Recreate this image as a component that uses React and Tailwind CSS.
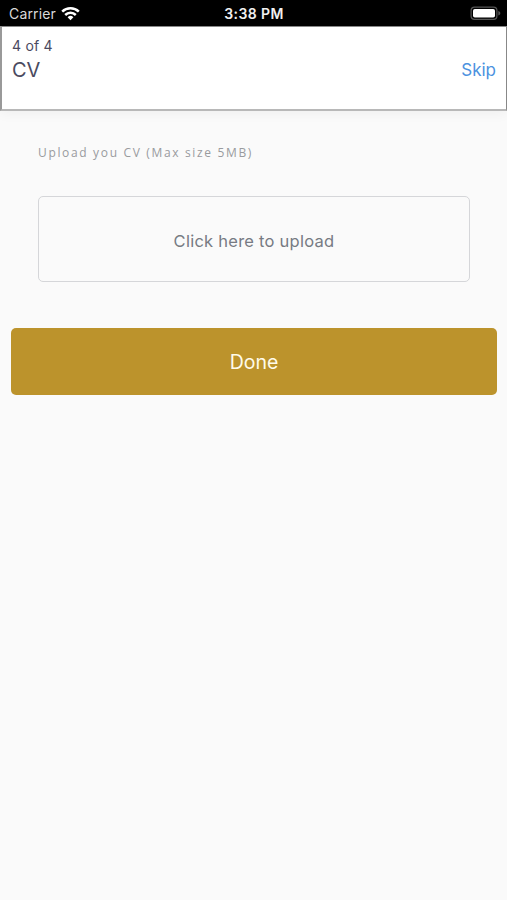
function StatusBar() {
  return (
    <div className="grid h-[26px] grid-cols-3 items-center bg-black text-white">
      <div className="flex items-center gap-[5px] pl-[9px] text-[14px] leading-none text-[#d9d9d9]">
        <span className="w-[47px] pt-px whitespace-nowrap tracking-[0.15px]">Carrier</span>
        <svg width="19" height="15" viewBox="0 0 19 15" fill="none" stroke="white" strokeWidth="2.5">
          <path d="M1.2 5.7a11.8 11.8 0 0 1 16.6 0" />
          <path d="M4.2 9a7.5 7.5 0 0 1 10.6 0" />
          <path d="M9.5 14.2 6.6 11.3a4.1 4.1 0 0 1 5.8 0z" fill="white" stroke="none" />
        </svg>
      </div>
      <div className="pt-px pl-px text-center text-[14px] leading-none font-semibold tracking-[0.4px] text-[#f0f0f0]">3:38 PM</div>
      <div className="flex justify-end pr-[6px]">
        <svg width="31" height="15" viewBox="0 0 31 15">
          <rect x="1.1" y="1.1" width="25.8" height="12.3" rx="3.4" fill="none" stroke="#555" strokeWidth="1.2" />
          <rect x="3" y="3" width="22" height="8.6" rx="1.8" fill="white" />
          <path d="M28.3 5v4.6c1.6-.6 2-1.3 2-2.3s-.4-1.8-2-2.3z" fill="#555" />
        </svg>
      </div>
    </div>
  );
}

function Header() {
  return (
    <header className="flex h-[85px] items-start justify-between border-t border-r border-b-2 border-l-2 border-t-[#888] border-r-[#888] border-b-[#b8b8b8] border-l-[#999] bg-white pt-[10px] pr-[10px] pl-[10px] shadow-[0_2px_12px_rgba(0,0,0,0.05)]">
      <div className="text-[#4a4a60]">
        <p className="text-[14px] leading-[18px] tracking-[0.2px]">4 of 4</p>
        <h1 className="mt-[3px] text-[20px] leading-6">CV</h1>
      </div>
      <button className="mt-[21px] text-[17px] leading-6 text-[#4b92e0]">Skip</button>
    </header>
  );
}

export default function App() {
  return (
    <div className="min-h-screen bg-[#fafafa] font-[Inter,'Liberation_Sans',sans-serif]">
      <StatusBar />
      <Header />
      <main className="pt-[34px] pr-[10px] pl-[11px]">
        <p className="ml-[27px] font-['Open_Sans',sans-serif] text-[12px] leading-4 tracking-[1.66px] text-[#999b9e]">
          Upload you CV (Max size 5MB)
        </p>
        <button className="mr-[26px] ml-[27px] mt-[35px] flex h-[86px] w-[432px] items-center justify-center rounded-[5px] border-[1.5px] border-[#d5d6d9] pt-[5px] text-[16.5px] tracking-[0.25px] text-[#777b83]">
          Click here to upload
        </button>
        <button className="mt-[46px] flex h-[67px] w-full items-center justify-center rounded-[5px] bg-[#bc932c] pt-[3px] text-[19.5px] text-[#fffbea]">
          Done
        </button>
      </main>
    </div>
  );
}
